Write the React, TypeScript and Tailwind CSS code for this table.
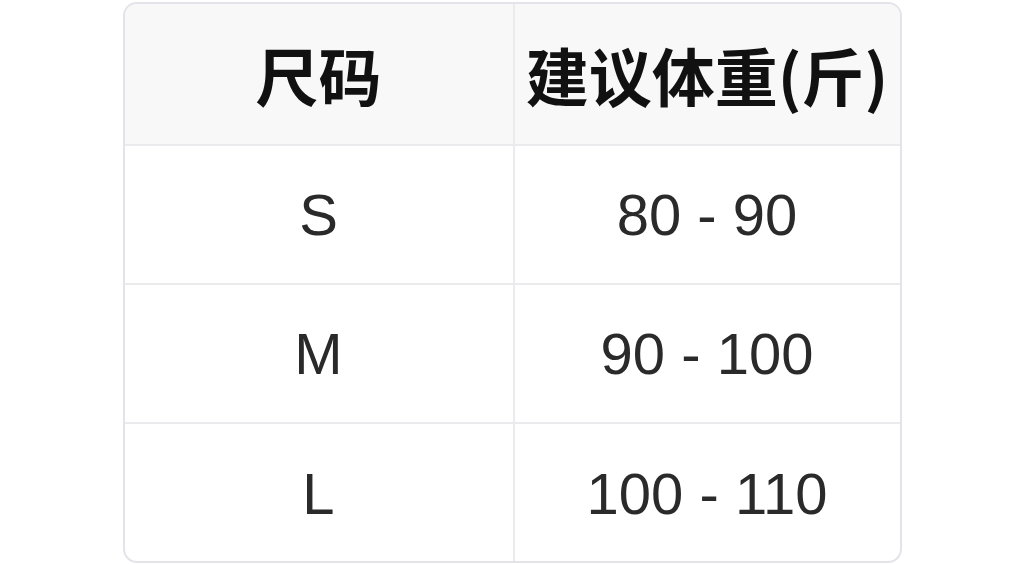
import { Fragment } from 'react';

const rows = [
    { size: 'S', weight: '80 - 90' },
    { size: 'M', weight: '90 - 100' },
    { size: 'L', weight: '100 - 110' },
];

export default function App() {
    return (
        <div className="w-full h-[564px] bg-white flex justify-center pt-[2px] font-['Liberation_Sans','Noto_Sans_CJK_SC',sans-serif]">
            <div className="w-[779px] h-[561px] rounded-[14px] border-2 border-[#e3e3e9] overflow-hidden grid grid-cols-[390px_1fr] grid-rows-[142px_139px_139px_139px]">
                <div className="bg-[#f8f8f8] border-r-2 border-b-2 border-[#ebebee] flex items-center justify-center text-[63px] font-bold text-[#111] font-['Noto_Sans_CJK_SC',sans-serif]">
                    尺码
                </div>
                <div className="bg-[#f8f8f8] border-b-2 border-[#ebebee] flex items-center justify-center text-[63px] font-bold text-[#111] font-['Noto_Sans_CJK_SC',sans-serif]">
                    建议体重(斤)
                </div>
                {rows.map((row, i) => (
                    <Fragment key={row.size}>
                        <div
                            className={`border-r-2 border-[#ebebee] flex items-center justify-center text-[58px] text-[#2a2a2a] ${
                                i < rows.length - 1 ? 'border-b-2' : ''
                            }`}
                        >
                            {row.size}
                        </div>
                        <div
                            className={`border-[#ebebee] flex items-center justify-center text-[58px] text-[#2a2a2a] ${
                                i < rows.length - 1 ? 'border-b-2' : ''
                            }`}
                        >
                            {row.weight}
                        </div>
                    </Fragment>
                ))}
            </div>
        </div>
    );
}
